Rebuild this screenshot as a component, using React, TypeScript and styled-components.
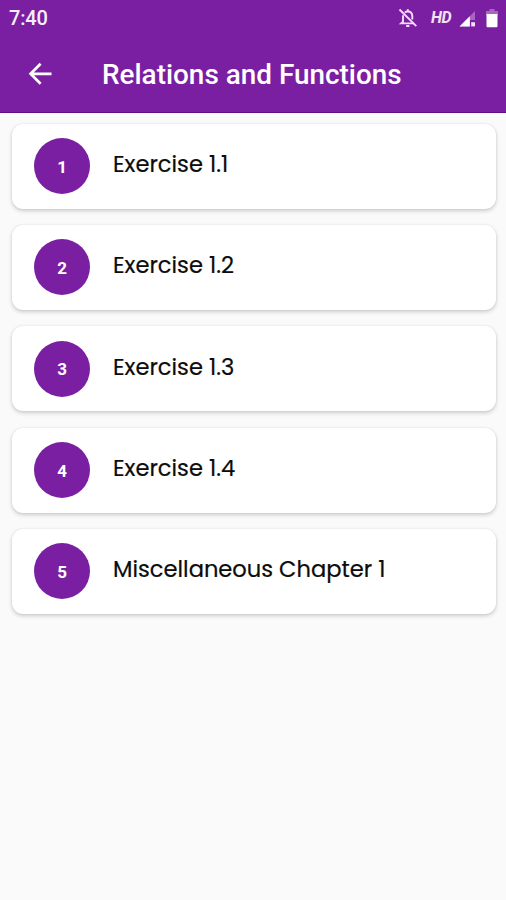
import React from 'react';
import styled, { createGlobalStyle } from 'styled-components';

const GlobalStyle = createGlobalStyle`
  * { box-sizing: border-box; }
  body { margin: 0; background: #fafafa; }
`;

const Screen = styled.div`
  display: flex;
  flex-direction: column;
  height: 900px;
  overflow: hidden;
  background: #fafafa;
  font-family: Roboto, sans-serif;
`;

const Header = styled.header`
  height: 113px;
  background: #7b1fa2;
  border-bottom: 1px solid #5f0c86;
  color: #fff;
`;

const StatusBar = styled.div`
  display: flex;
  align-items: center;
  justify-content: space-between;
  height: 36px;
  padding: 0 6px 0 9px;
`;

const Clock = styled.span`
  font-size: 20px;
  font-weight: 500;
  line-height: 36px;
  letter-spacing: -0.2px;
  color: #f8effb;
`;

const StatusIcons = styled.div`
  display: flex;
  align-items: center;
  height: 36px;
`;

const HdLabel = styled.span`
  width: 22px;
  margin: 0 6px 0 13px;
  font-size: 16px;
  font-weight: 700;
  font-style: italic;
  line-height: 36px;
  letter-spacing: -0.4px;
  color: #f3e3f7;
`;

const Toolbar = styled.div`
  display: flex;
  align-items: center;
  height: 76px;
  padding-left: 28px;
`;

const BackButton = styled.button`
  display: flex;
  width: 24px;
  height: 24px;
  padding: 0;
  border: 0;
  background: none;
`;

const Title = styled.h1`
  margin: 2px 0 0 50px;
  font-size: 27.9px;
  font-weight: 500;
  line-height: 36px;
  white-space: nowrap;
`;

const List = styled.main`
  display: flex;
  flex-direction: column;
  gap: 16.3px;
  padding: 10.7px 10.5px 0 11.5px;
`;

const Card = styled.div`
  display: flex;
  align-items: center;
  height: 85px;
  padding-left: 22.7px;
  border-radius: 11px;
  background: #fff;
  box-shadow: 0 2px 4px rgba(0, 0, 0, 0.18), 0 0 2px rgba(0, 0, 0, 0.1);
`;

const Badge = styled.span`
  display: flex;
  align-items: center;
  justify-content: center;
  width: 56px;
  height: 56px;
  padding-top: 1px;
  border-radius: 50%;
  background: #7b1fa2;
  color: #fff;
  font-size: 17px;
  font-weight: 700;
`;

const Label = styled.span`
  margin: 0 0 4px 22.8px;
  color: #0c0c0c;
  font-family: Poppins, Inter, sans-serif;
  font-size: 22.6px;
  line-height: 30px;
  white-space: nowrap;
  -webkit-text-stroke: 0.2px #0c0c0c;
`;

const chapters = [
  'Exercise 1.1',
  'Exercise 1.2',
  'Exercise 1.3',
  'Exercise 1.4',
  'Miscellaneous Chapter 1',
];

const BellOffIcon = () => (
  <svg width="20" height="20" viewBox="0 0 20 20" fill="none" stroke="#f0dff5" strokeWidth="1.9">
    <path d="M6.8 4.6C7.5 3.9 8.5 3.5 9.7 3.5c2.9 0 4.6 2.1 4.6 4.8v3.2M5 7.2v6.6L3.2 15.4h12.6" />
    <path d="M1.5 1.5 18.3 18.2" />
    <path d="M9.8 3.5V1.2M8.2 18h3.2" strokeWidth="2" />
  </svg>
);

const SignalIcon = () => (
  <svg width="17" height="17" viewBox="0 0 17 17">
    <path d="M16 1v15.5H.5z" fill="#a866c0" />
    <path d="M10.8 6.2v10.3H.5z" fill="#fff" />
    <path d="M11 10h6v7h-6z" fill="#7b1fa2" />
    <path d="M12.2 12.2h3.8v4.2h-3.8z" fill="#f3e3f7" />
  </svg>
);

const BatteryIcon = () => (
  <svg width="12" height="19" viewBox="0 0 12 19">
    <path d="M3.5 0h5v2H12v4H0V2h3.5z" fill="#a866c0" />
    <path d="M.5 5h11v12.3a1 1 0 0 1-1 1h-9a1 1 0 0 1-1-1z" fill="#fff" />
  </svg>
);

const BatterySlot = styled.span`
  display: flex;
  margin: 0 2px 0 10px;
`;

export default function App() {
  return (
    <Screen>
      <GlobalStyle />
      <Header>
        <StatusBar>
          <Clock>7:40</Clock>
          <StatusIcons>
            <BellOffIcon />
            <HdLabel>HD</HdLabel>
            <SignalIcon />
            <BatterySlot>
              <BatteryIcon />
            </BatterySlot>
          </StatusIcons>
        </StatusBar>
        <Toolbar>
          <BackButton aria-label="Back">
            <svg width="24" height="24" viewBox="0 0 24 24" fill="none" stroke="#fff" strokeWidth="2.7">
              <path d="M12.6 1.8 2.6 11.8 12.6 21.8M2.6 11.8H23.5" />
            </svg>
          </BackButton>
          <Title>Relations and Functions</Title>
        </Toolbar>
      </Header>
      <List>
        {chapters.map((name, index) => (
          <Card key={name}>
            <Badge>{index + 1}</Badge>
            <Label>{name}</Label>
          </Card>
        ))}
      </List>
    </Screen>
  );
}
